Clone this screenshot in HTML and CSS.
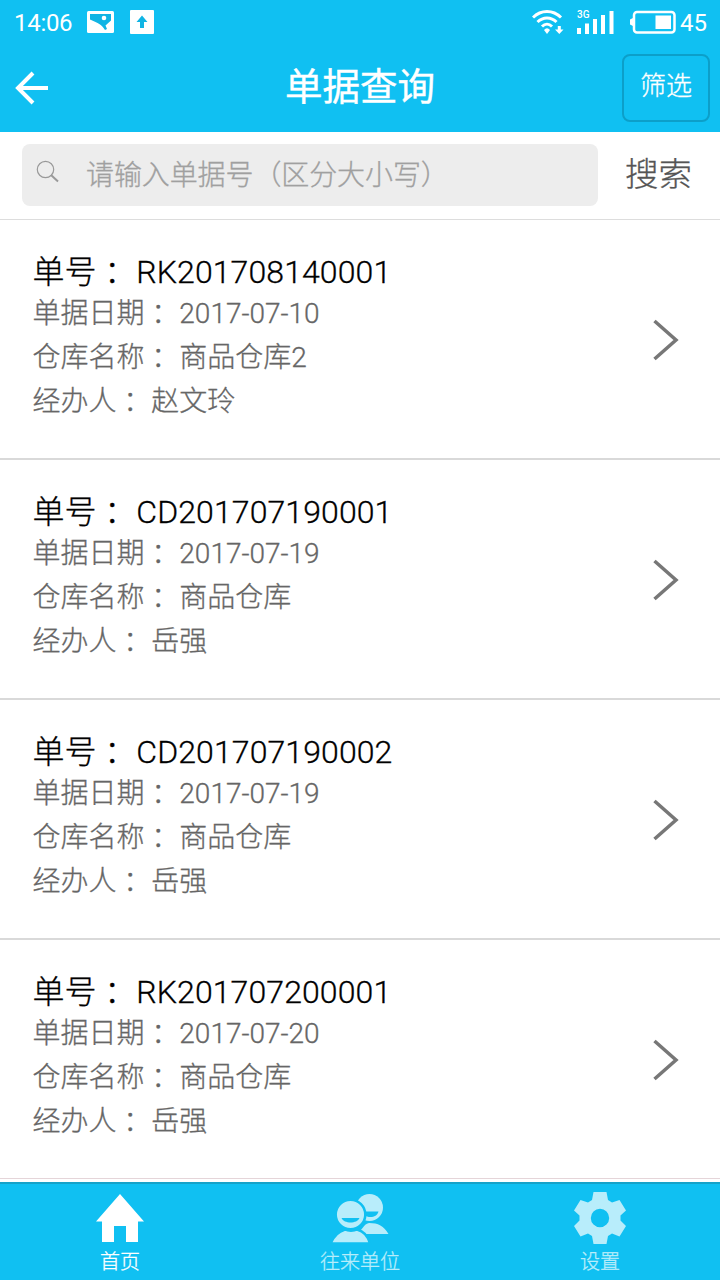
FILE: index.html
```html
<!DOCTYPE html>
<html lang="zh-CN">
<head>
<meta charset="utf-8">
<title>单据查询</title>
<link rel="stylesheet" href="styles.css">
</head>
<body>
<div class="app">
  <header class="top">
    <div class="status">
      <span class="clock">14:06</span>
      <svg class="pic" width="27" height="22" viewBox="0 0 27 22"><rect width="27" height="22" rx="1.500" fill="#fff"/><path d="M3 3H24V9.500L18.500 14.500L20 18L18 19C15 14 11 12 8.500 11L3 8.500Z" fill="#10b4e4"/><circle cx="17" cy="7" r="2.300" fill="#fff"/></svg>
      <svg class="upload" width="24" height="24" viewBox="0 0 24 24"><rect width="24" height="24" rx="1" fill="#fff"/><path d="M12 5.500L17.500 12H14V18H10V12H6.500Z" fill="#10b4e4"/></svg>
      <span class="spacer"></span>
      <svg class="wifi" width="32" height="28" viewBox="0 0 32 28" fill="none" stroke="#fff"><path d="M1 9.500C9 1.500 21 1.500 29 9.500M5.500 14C11 8.500 19 8.500 24.500 14M10 18.500C13 15.500 17 15.500 20 18.500" stroke-width="3"/><path d="M12 22Q15 18.500 18 22L15 26Z" fill="#fff" stroke="none"/><path d="M25.800 18H28.800V21.500H31.500L27.300 26L23 21.500H25.800Z" fill="#fff" stroke="none"/></svg>
      <div class="signal"><span class="net">3G</span><svg width="37" height="24" viewBox="0 0 37 24" fill="#fff"><path d="M0 18H4V24H0ZM8 13.500H12V24H8ZM16 9H20V24H16ZM24 5H28V24H24ZM32.500 1H36.500V24H32.500Z"/></svg></div>
      <svg class="battery" width="46" height="24" viewBox="0 0 46 24"><rect x="4" y="2" width="40.500" height="20.500" rx="3" fill="none" stroke="#fff" stroke-width="2.500"/><path d="M0 9.500L3 8V16L0 14.500Z" fill="#fff"/><rect x="25.500" y="5.500" width="15.500" height="13.500" fill="#fff"/></svg>
      <span class="percent">45</span>
    </div>
    <div class="navbar">
      <svg class="back" width="34" height="34" viewBox="0 0 34 34" fill="none" stroke="#fff" stroke-width="4"><path d="M18 2L3 17L18 32M3 17H33"/></svg>
      <h1>单据查询</h1>
      <button class="filter">筛选</button>
    </div>
  </header>
  <div class="search">
    <label class="box">
      <svg width="24" height="24" viewBox="0 0 24 24" fill="none" stroke="#999"><circle cx="9.500" cy="9.500" r="8.200" stroke-width="1.200"/><path d="M15 15L22 21.500" stroke-width="2"/></svg>
      <span>请输入单据号（区分大小写）</span>
    </label>
    <span class="go">搜索</span>
  </div>
  <main class="list">
    <section class="item">
      <div class="info"><h2>单号 ：<b>RK201708140001</b></h2><p>单据日期 ：<b>2017-07-10</b></p><p>仓库名称 ：<b>商品仓库2</b></p><p>经办人 ：<b>赵文玲</b></p></div>
      <svg class="chevron" width="26" height="42" viewBox="0 0 26 42"><path d="M1.500 2L23 21L1.500 40"/></svg>
    </section>
    <section class="item">
      <div class="info"><h2>单号 ：<b>CD201707190001</b></h2><p>单据日期 ：<b>2017-07-19</b></p><p>仓库名称 ：<b>商品仓库</b></p><p>经办人 ：<b>岳强</b></p></div>
      <svg class="chevron" width="26" height="42" viewBox="0 0 26 42"><path d="M1.500 2L23 21L1.500 40"/></svg>
    </section>
    <section class="item">
      <div class="info"><h2>单号 ：<b>CD201707190002</b></h2><p>单据日期 ：<b>2017-07-19</b></p><p>仓库名称 ：<b>商品仓库</b></p><p>经办人 ：<b>岳强</b></p></div>
      <svg class="chevron" width="26" height="42" viewBox="0 0 26 42"><path d="M1.500 2L23 21L1.500 40"/></svg>
    </section>
    <section class="item">
      <div class="info"><h2>单号 ：<b>RK201707200001</b></h2><p>单据日期 ：<b>2017-07-20</b></p><p>仓库名称 ：<b>商品仓库</b></p><p>经办人 ：<b>岳强</b></p></div>
      <svg class="chevron" width="26" height="42" viewBox="0 0 26 42"><path d="M1.500 2L23 21L1.500 40"/></svg>
    </section>
  </main>
  <nav class="tabs">
    <div class="tab active">
      <svg width="60" height="56" viewBox="0 0 60 56"><path d="M30 4L54 31.500H48V52H36V36H24V52H12V31.500H6Z" fill="#fff"/></svg>
      <span>首页</span>
    </div>
    <div class="tab">
      <svg width="60" height="56" viewBox="0 0 60 56"><g fill="#b8edfb"><circle cx="39.500" cy="17.500" r="13.500"/><path d="M25 44C32 42 33 34 39 33C48 33 54 36 58.500 44Z"/></g><path d="M34 21.500H48.500C47 27.500 39 28.500 34 25Z" fill="#10c0f2"/><g fill="#b8edfb" stroke="#10c0f2" stroke-width="2.500"><circle cx="20.500" cy="24.500" r="14.800"/><path d="M.500 53.500C4 45 10 41 15 39.500C18 41 24 41 27 39.500C33 41 38 46 40 53.500Z"/></g><path d="M11.500 28H29.500C27 34 14 34 11.500 28Z" fill="#10c0f2"/></svg>
      <span>往来单位</span>
    </div>
    <div class="tab">
      <svg width="60" height="56" viewBox="0 0 60 56"><path fill="#b8edfb" fill-rule="evenodd" d="M23.500 2H36.500L38 10L42 12.500L49.500 10L56 20.500L50.500 25.500V30.500L56 36L49.500 46.500L42 43.500L38 46L36.500 54H23.500L22 46L18 43.500L10.500 46.500L4 36L9.500 30.500V25.500L4 20.500L10.500 10L18 12.500L22 10ZM30 18.800A9.200 9.200 0 1 0 30 37.200A9.200 9.200 0 1 0 30 18.800Z"/></svg>
      <span>设置</span>
    </div>
  </nav>
</div>
</body>
</html>
```
FILE: styles.css
```css
* { box-sizing: border-box; }
body { margin: 0; background: #fff; font-family: Roboto, "Noto Sans CJK SC", sans-serif; font-weight: 300; -webkit-text-stroke: 0.3px currentColor; }
h1, h2, p { margin: 0; font-weight: inherit; }
svg { display: block; flex: none; }
.app { width: 720px; height: 1280px; display: flex; flex-direction: column; overflow: hidden; }
.top { height: 132px; background: #10c0f2; color: #fff; flex: none; }
.status { height: 44px; display: flex; align-items: center; padding: 0 13px 0 14px; font-size: 24px; font-weight: 400; -webkit-text-stroke: 0; }
.clock { width: 73px; padding-top: 1px; letter-spacing: -0.3px; }
.upload { margin-left: 16px; }
.spacer { flex: 1; }
.signal { position: relative; margin: 0 16px 0 13px; }
.net { position: absolute; left: 0; top: 0; font-size: 10px; line-height: 10px; font-weight: 500; }
.percent { margin-left: 4px; padding-top: 1px; }
.navbar { height: 88px; display: grid; grid-template-columns: 98px 1fr 98px; align-items: center; }
.back { margin-left: 15px; }
h1 { text-align: center; font-size: 37.500px; font-weight: 400; line-height: 50px; padding-bottom: 2px; -webkit-text-stroke: 0.400px #fff; }
.filter { width: 88px; height: 68px; padding: 0 0 10px; border: 2px solid #0c9fc9; border-radius: 8px; background: none; color: #fff; font: inherit; font-size: 26px; }
.search { height: 88px; flex: none; border-bottom: 1px solid #ddd; display: flex; align-items: flex-start; padding: 12px 22px; }
.box { width: 576px; height: 62px; border-radius: 8px; background: #ededed; display: flex; align-items: center; padding-left: 14px; gap: 26px; font-size: 28px; color: #a0a0a0; }
.box svg { margin-bottom: 6px; }
.box span { padding-bottom: 5px; letter-spacing: -0.1px; }
.go { font-size: 33.500px; color: #555; margin-left: 27px; line-height: 62px; }
.list { flex: 1; min-height: 0; }
.item { height: 240px; border-bottom: 2px solid #d9d9d9; display: flex; align-items: center; justify-content: space-between; padding: 0 41px 0 32.500px; }
.item:last-child { height: 239px; border-bottom: 1px solid #e5d5d9; }
.info { padding-bottom: 2px; }
h2 { font-size: 32px; line-height: 40px; color: #000; }
h2 b { letter-spacing: 0.1px; }
p { font-size: 28px; line-height: 44px; color: #666; }
b { font-weight: inherit; }
.chevron { margin-top: 2px; }
.chevron path { fill: none; stroke: #777; stroke-width: 3.500; }
.tabs { height: 98px; flex: none; background: #10c0f2; border-top: 2px solid #16a2c9; display: grid; grid-template-columns: repeat(3, 1fr); }
.tab { display: flex; flex-direction: column; align-items: center; padding-top: 6px; font-size: 20px; line-height: 32px; color: #b8edfb; }
.active { color: #fff; }
```
